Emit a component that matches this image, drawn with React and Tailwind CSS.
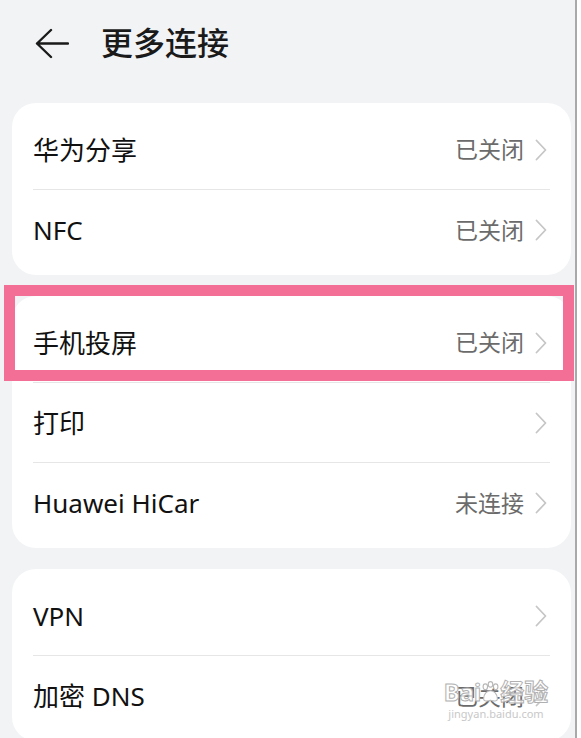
import React from 'react';

const FONT = { fontFamily: '"Noto Sans", "Noto Sans CJK SC", sans-serif' };

const GROUPS = [
    [
        { label: '华为分享', value: '已关闭' },
        { label: 'NFC', value: '已关闭' },
    ],
    [
        { label: '手机投屏', value: '已关闭' },
        { label: '打印', value: '' },
        { label: 'Huawei HiCar', value: '未连接' },
    ],
    [
        { label: 'VPN', value: '' },
        { label: '加密 DNS', value: '已关闭' },
    ],
];

function Chevron() {
    return (
        <svg width="12" height="22" viewBox="0 0 12 22" fill="none" className="shrink-0">
            <path d="M1.5 1.5 L10.5 11 L1.5 20.5" stroke="#c6c6c6" strokeWidth="1.8" strokeLinecap="round" strokeLinejoin="round" />
        </svg>
    );
}

function Row({ label, value, last }) {
    return (
        <div className={`mx-[21px] h-[80px] flex items-center justify-between pr-[3px] ${last ? '' : 'border-b border-[#e6e6e6]'}`}>
            <span className="text-[26px] text-[#111] leading-none">{label}</span>
            <div className="flex items-center gap-[11px]">
                {value && <span className="text-[23px] text-[#6b6b6b] leading-none">{value}</span>}
                <Chevron />
            </div>
        </div>
    );
}

function PawIcon() {
    return (
        <svg width="19" height="24" viewBox="0 0 22 26" fill="none" stroke="#b8b8b8" strokeWidth="1.3">
            <ellipse cx="5" cy="7" rx="2.6" ry="3.4" fill="white" />
            <ellipse cx="11" cy="4.2" rx="2.6" ry="3.2" fill="white" />
            <ellipse cx="17" cy="7" rx="2.6" ry="3.4" fill="white" />
            <path d="M3 21 C3 15 7 11.5 11 11.5 C15 11.5 19 15 19 21 C19 24 15 24 11 22.5 C7 24 3 24 3 21 Z" fill="white" />
        </svg>
    );
}

export default function App() {
    return (
        <div className="relative w-[581px] h-[738px] overflow-hidden bg-white flex" style={FONT}>
            <div className="w-[577px] h-full bg-[#f1f3f5] border-r-2 border-[#a9a9a9]">
                {/* header */}
                <div className="h-[103px] flex items-center pb-[17px]">
                    <svg width="34" height="31" viewBox="0 0 34 31" fill="none" className="ml-[35px]">
                        <path d="M2 15.5 H33 M16 2 L2 15.5 L16 29" stroke="#1a1a1a" strokeWidth="2.4" strokeLinecap="round" strokeLinejoin="round" />
                    </svg>
                    <h1 className="ml-[32px] text-[32px] font-medium text-[#1a1a1a] leading-none">更多连接</h1>
                </div>

                <div className="flex flex-col gap-[21px] ml-[12px] w-[559px]">
                    {GROUPS.map((rows, gi) => (
                        <div key={gi} className="bg-white rounded-[24px] pt-[7px] pb-[5px]">
                            {rows.map((r, i) => (
                                <Row key={r.label} {...r} last={i === rows.length - 1} />
                            ))}
                        </div>
                    ))}
                </div>
            </div>

            {/* highlight annotation */}
            <div className="absolute left-[4px] top-[285px] w-[570px] h-[96px] border-[11px] border-[#f36f95]" />

            {/* watermark */}
            <div className="absolute left-[443px] top-[680px] w-[106px] flex flex-col items-center">
                <div className="flex items-center text-[24px] leading-none font-bold text-white/75 [-webkit-text-stroke:1px_#b0b0b0]">
                    <span>Bai</span>
                    <PawIcon />
                    <span>经验</span>
                </div>
                <span className="text-[11px] leading-none mt-[4px] text-[#c8c8c8]">jingyan.baidu.com</span>
            </div>
        </div>
    );
}
